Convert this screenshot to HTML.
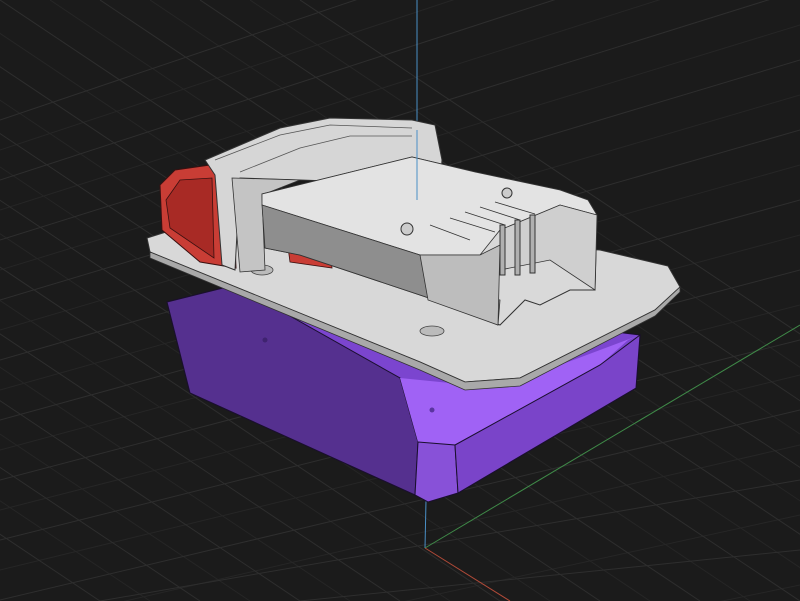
<!DOCTYPE html>
<html><head><meta charset="utf-8"><style>
html,body{margin:0;padding:0;background:#1c1c1c;width:800px;height:601px;overflow:hidden;}
svg{display:block}
</style></head><body>
<svg width="800" height="601" viewBox="0 0 800 601" xmlns="http://www.w3.org/2000/svg">
<rect width="800" height="601" fill="#1b1b1b"/>
<g stroke="#262626" stroke-width="1" fill="none">
<path d="M0,150 L800,-115 M0,210 L800,-45 M0,270 L800,25 M0,330 L800,95 M0,390 L800,165 M0,450 L800,235 M0,510 L800,305 M0,570 L800,375 M0,630 L800,445 M0,690 L800,515 M0,750 L800,585"/>
<path d="M-150,0 L750,601 M-50,0 L850,601 M50,0 L950,601 M150,0 L1050,601 M250,0 L1150,601 M-250,0 L650,601 M-350,0 L550,601 M-450,0 L450,601 M-550,0 L350,601 M-650,0 L250,601 M-750,0 L150,601"/>
</g>
<g stroke="#2e2e2e" stroke-width="1" fill="none">
<path d="M0,120 L800,-150 M0,180 L800,-80 M0,240 L800,-10 M0,300 L800,60 M0,360 L800,130 M0,420 L800,200 M0,480 L800,270 M0,540 L800,340 M0,600 L800,410 M100,601 L800,480 M300,601 L800,550 M500,601 L800,620"/>
<path d="M-200,0 L700,601 M-100,0 L800,601 M0,0 L900,601 M100,0 L1000,601 M200,0 L1100,601 M300,0 L1200,601 M-300,0 L600,601 M-400,0 L500,601 M-500,0 L400,601 M-600,0 L300,601 M-700,0 L200,601 M-800,0 L100,601"/>
</g>
<line x1="417" y1="0" x2="417" y2="200" stroke="#4a8fc6" stroke-width="1"/>
<line x1="426" y1="500" x2="425" y2="548" stroke="#4a8fc6" stroke-width="1"/>
<line x1="425" y1="548" x2="800" y2="325" stroke="#3f8a48" stroke-width="1"/>
<line x1="425" y1="548" x2="510" y2="601" stroke="#b04a38" stroke-width="1"/>
<!-- purple box -->
<polygon points="167,302 235,285 640,335 636,388 458,493 428,502 415,495 190,393" fill="#7b45cf" stroke="#1a0f2e" stroke-width="1"/>
<polygon points="167,302 235,285 400,378 418,442 415,495 190,393" fill="#55308f" stroke="#1a0f2e" stroke-width="1"/>
<polygon points="400,378 418,442 455,445 600,365 628,340 640,335 520,380 470,385" fill="#a062f5"/>
<polygon points="418,442 455,445 458,493 428,502 415,495" fill="#8851d8" stroke="#1a0f2e" stroke-width="1"/>
<polygon points="455,445 600,365 640,335 636,388 458,493" fill="#7a44c9" stroke="#1a0f2e" stroke-width="1"/>
<circle cx="265" cy="340" r="2.5" fill="#3f2370"/>
<circle cx="432" cy="410" r="2.5" fill="#5a34a0"/>
<!-- gray plate -->
<polygon points="147,238 185,226 600,250 668,266 680,287 655,310 520,378 465,382 420,362 150,252" fill="#d8d8d8" stroke="#333" stroke-width="1"/>
<polygon points="150,252 420,362 465,382 520,378 655,310 680,287 680,292 655,316 520,386 465,390 420,370 150,258" fill="#a9a9a9" stroke="#333" stroke-width="0.8"/>
<ellipse cx="262" cy="270" rx="11" ry="5" fill="#bbb" stroke="#444" stroke-width="0.8"/>
<ellipse cx="432" cy="331" rx="12" ry="5" fill="#bbb" stroke="#444" stroke-width="0.8"/>
<ellipse cx="581" cy="262" rx="9" ry="4" fill="#bbb" stroke="#444" stroke-width="0.8"/>
<!-- red latch -->
<polygon points="160,185 175,170 210,165 232,175 236,268 200,262 162,230" fill="#c93d35" stroke="#3a1010" stroke-width="1"/>
<polygon points="166,200 180,180 212,178 214,258 170,228" fill="#a82a25" stroke="#3a1010" stroke-width="0.8"/>
<polygon points="285,225 310,228 330,245 332,268 290,262" fill="#c93d35" stroke="#3a1010" stroke-width="0.8"/>
<!-- arch tower -->
<polygon points="205,160 280,128 330,118 412,120 435,125 442,160 440,185 300,180 240,178 235,270 222,265 215,175" fill="#d6d6d6" stroke="#333" stroke-width="1"/>
<polygon points="232,178 300,180 262,195 265,270 240,272" fill="#c4c4c4" stroke="#333" stroke-width="0.8"/>
<path d="M215,160 L280,135 L330,125 L412,128 M240,172 L300,148 L350,136 L412,136" stroke="#555" fill="none" stroke-width="0.8"/>
<!-- main raised block -->
<polygon points="262,194 412,157 475,172 560,190 588,200 597,215 595,290 570,290 540,305 525,300 500,325 450,305 300,255 265,248" fill="#d9d9d9" stroke="#333" stroke-width="1"/>
<polygon points="262,194 412,157 475,172 560,190 588,200 597,215 560,205 500,230 480,255 420,255 262,205" fill="#e3e3e3" stroke="#333" stroke-width="0.8"/>
<polygon points="262,205 420,255 428,280 500,300 498,325 450,305 300,255 265,248" fill="#8e8e8e" stroke="#333" stroke-width="0.8"/>
<polygon points="420,255 480,255 500,245 498,325 428,300" fill="#bdbdbd" stroke="#333" stroke-width="0.8"/>
<polygon points="500,230 560,205 597,215 595,290 550,260 500,270" fill="#cfcfcf" stroke="#333" stroke-width="0.8"/>
<g stroke="#333" stroke-width="1" fill="#b0b0b0">
<rect x="500" y="225" width="5" height="50"/><rect x="515" y="220" width="5" height="55"/><rect x="530" y="215" width="5" height="58"/>
</g>
<g stroke="#333" stroke-width="0.8" fill="none">
<path d="M430,225 L470,240 M450,218 L495,232 M465,212 L505,225 M480,207 L520,220 M495,202 L535,214"/>
</g>
<circle cx="407" cy="229" r="6" fill="#ccc" stroke="#333"/>
<circle cx="507" cy="193" r="5" fill="#ccc" stroke="#333"/>
<line x1="417" y1="130" x2="417" y2="200" stroke="#4a8fc6" stroke-width="1"/>
</svg>
</body></html>
